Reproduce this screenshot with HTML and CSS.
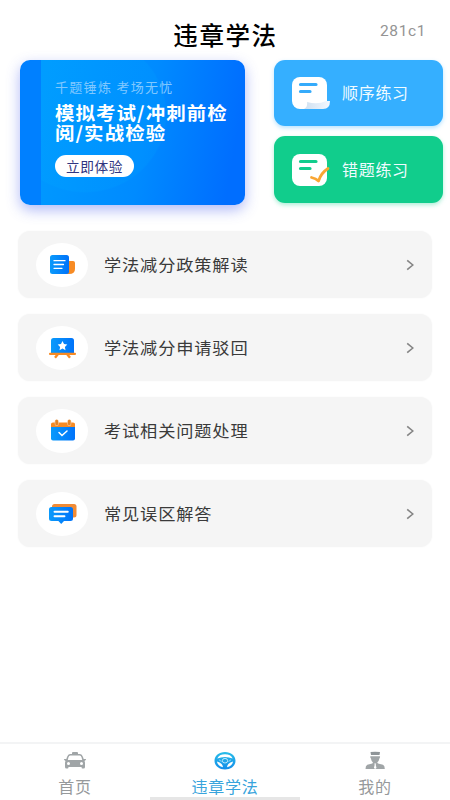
FILE: index.html
```html
<!DOCTYPE html>
<html lang="zh-CN">
<head>
<meta charset="utf-8">
<title>违章学法</title>
<link rel="stylesheet" href="styles.css">
</head>
<body>
<header class="header">
  <h1 class="title">违章学法</h1>
  <span class="code">281c1</span>
</header>
<main class="main">
  <section class="hero">
    <div class="exam">
      <p class="slogan">千题锤炼 考场无忧</p>
      <h2 class="headline">模拟考试/冲刺前检<br>阅/实战检验</h2>
      <button class="try">立即体验</button>
    </div>
    <div class="modes">
      <div class="mode mode-blue">
        <svg width="40" height="34" viewBox="0 0 40 34">
          <defs><linearGradient id="curl"><stop offset="0" stop-color="#cfe0f0"/><stop offset="1" stop-color="#f3f8ff"/></linearGradient></defs>
          <rect y="1" width="35" height="32" rx="8" fill="#fff"/>
          <path d="M12 33Q16 31 15 26Q26 29 34 25H38Q38 33 31 33Z" fill="url(#curl)"/>
          <path d="M8.500 8.500H24M8.500 15.500H18" stroke="#35abfb" stroke-width="3.200" stroke-linecap="round"/>
        </svg>
        <span>顺序练习</span>
      </div>
      <div class="mode mode-green">
        <svg width="40" height="34" viewBox="0 0 40 34">
          <rect y="1" width="35" height="32" rx="8" fill="#fff"/>
          <path d="M8.500 8.500H24M8.500 15.500H18" stroke="#11cd8c" stroke-width="3.200" stroke-linecap="round"/>
          <path d="M19.500 24.500Q24 25.500 26.500 28Q29 20 36 15.500" fill="none" stroke="#f9a633" stroke-width="2.800" stroke-linecap="round" stroke-linejoin="round"/>
        </svg>
        <span>错题练习</span>
      </div>
    </div>
  </section>
  <section class="list">
    <svg class="defs" width="0" height="0"><defs><linearGradient id="blue"><stop offset="0" stop-color="#0a9afb"/><stop offset="1" stop-color="#0073fa"/></linearGradient></defs></svg>
    <div class="row">
      <span class="disc"><svg width="28" height="24" viewBox="0 0 28 24">
        <path d="M17 8H24Q26 8 26 10V16Q26 21 20 21H17Z" fill="#f78b24"/>
        <rect x="1" y="2" width="19" height="19" rx="2.500" fill="url(#blue)"/>
        <path d="M5 7.700H16M5 11.500H14.500M5 15.300H13" stroke="#fff" stroke-width="1.300" stroke-linecap="round"/>
      </svg></span>
      <span class="label">学法减分政策解读</span>
      <svg class="arrow" width="8" height="12" viewBox="0 0 8 12"><path d="M1.200 1.300L6.800 6L1.200 10.700"/></svg>
    </div>
    <div class="row">
      <span class="disc"><svg width="28" height="24" viewBox="0 0 28 24">
        <path d="M9 18L6 21.700M18 18L21 21.700" stroke="#f78b24" stroke-width="2.400"/>
        <path d="M2 17V4.500Q2 2 4.500 2H22.500Q25 2 25 4.500V17Z" fill="url(#blue)"/>
        <rect y="16.700" width="27" height="2.200" rx="1" fill="#f78b24"/>
        <path d="M13.500 5L15 8.100L18.300 8.500L15.900 10.900L16.500 14.200L13.500 12.600L10.500 14.200L11.100 10.900L8.700 8.500L12 8.100Z" fill="#fff"/>
      </svg></span>
      <span class="label">学法减分申请驳回</span>
      <svg class="arrow" width="8" height="12" viewBox="0 0 8 12"><path d="M1.200 1.300L6.800 6L1.200 10.700"/></svg>
    </div>
    <div class="row">
      <span class="disc"><svg width="28" height="24" viewBox="0 0 28 24">
        <path d="M2 9V5Q2 3.500 4 3.500H24Q26 3.500 26 5V9Z" fill="#f78b24"/>
        <path d="M7.700 2.500V5M20.300 2.500V5" stroke="#f6c28f" stroke-width="4" stroke-linecap="round"/>
        <path d="M7.700 2V5M20.300 2V5" stroke="#e58425" stroke-width="2.600" stroke-linecap="round"/>
        <path d="M2 8H26V19.500Q26 21.500 24 21.500H4Q2 21.500 2 19.500Z" fill="url(#blue)"/>
        <path d="M10 13.500L13 16.500L18 12" fill="none" stroke="#fff" stroke-width="1.500" stroke-linecap="round"/>
      </svg></span>
      <span class="label">考试相关问题处理</span>
      <svg class="arrow" width="8" height="12" viewBox="0 0 8 12"><path d="M1.200 1.300L6.800 6L1.200 10.700"/></svg>
    </div>
    <div class="row">
      <span class="disc"><svg width="28" height="24" viewBox="0 0 28 24">
        <rect x="3" y="2" width="24.500" height="13.500" rx="2.500" fill="#f18b35"/>
        <path d="M2.500 5H21.500Q24 5 24 7.500V16.500Q24 19 21.500 19H15L12.200 22L9.400 19H2.500Q0 19 0 16.500V7.500Q0 5 2.500 5Z" fill="url(#blue)"/>
        <path d="M5.500 9.700H18.800M5.500 14.300H15.500" stroke="#fff" stroke-width="1.900" stroke-linecap="round"/>
      </svg></span>
      <span class="label">常见误区解答</span>
      <svg class="arrow" width="8" height="12" viewBox="0 0 8 12"><path d="M1.200 1.300L6.800 6L1.200 10.700"/></svg>
    </div>
  </section>
</main>
<nav class="tabs">
  <div class="tab">
    <svg width="24" height="20" viewBox="0 0 24 20">
      <path fill="#a0a5a7" fill-rule="evenodd" d="M9 2Q9 1 10 1H14Q15 1 15 2V3H17Q19 3 20 6L20.700 8H22.500Q23.500 8 22.800 9L21.500 10Q22 11 22 12V16Q22 17.500 20.500 17.500H19.500Q18.500 17.500 18.500 16H5.500Q5.500 17.500 4.500 17.500H3.500Q2 17.500 2 16V12Q2 11 2.500 10L1.200 9Q.500 8 1.500 8H3.300L4 6Q5 3 7 3H9ZM7.200 4.500Q6 4.500 5.400 6.500L4.800 9H19.200L18.600 6.500Q18 4.500 16.800 4.500ZM5.500 11A1.500 1.500 0 1 0 5.500 14A1.500 1.500 0 1 0 5.500 11ZM18.500 11A1.500 1.500 0 1 0 18.500 14A1.500 1.500 0 1 0 18.500 11Z"/>
    </svg>
    <span>首页</span>
  </div>
  <div class="tab active">
    <svg width="24" height="20" viewBox="0 0 24 20">
      <defs><linearGradient id="wheel" x2="0" y2="1"><stop offset="0" stop-color="#28bde8"/><stop offset="1" stop-color="#138dea"/></linearGradient></defs>
      <path fill="url(#wheel)" fill-rule="evenodd" d="M12 1C18 1 22.500 4.800 22.500 9.800S18 18.500 12 18.500S1.500 14.700 1.500 9.800S6 1 12 1ZM4.300 7.500Q8 6 12 6T19.700 7.500Q18 3.200 12 3.200T4.300 7.500ZM4 10.500Q4.500 15 10 16.200Q9.500 12 4 10.500ZM20 10.500Q14.500 12 14 16.200Q19.500 15 20 10.500Z"/>
      <ellipse cx="12" cy="9.700" rx="2.700" ry="2.300" fill="none" stroke="#dff5ff" stroke-width=".8"/>
      <path d="M6 8.800L8.500 10.500M18 8.800L15.500 10.500" stroke="#dff5ff" stroke-width=".6"/>
    </svg>
    <span>违章学法</span>
  </div>
  <div class="tab">
    <svg width="24" height="20" viewBox="0 0 24 20">
      <path fill="#8f9598" d="M7.500 1Q12 .3 17 1L16.500 4H8Z"/>
      <path fill="#a0a5a7" d="M7.500 5.200H16.800Q17.500 6 16.500 7.200Q16 10 14.200 11.500L15 12.500L20 13.800Q21.800 14.500 21.800 18H2.500Q2.500 14.500 4.300 13.800L9.300 12.500L10 11.500Q8.300 10 7.800 7.200Q6.800 6 7.500 5.200Z"/>
      <path fill="#fff" d="M11.200 12.500H13.200L12.700 13.800L13.500 17L12.200 18L10.900 17L11.700 13.800Z"/>
    </svg>
    <span>我的</span>
  </div>
  <i class="indicator"></i>
</nav>
</body>
</html>
```
FILE: styles.css
```css
* { box-sizing: border-box; }
body {
  margin: 0;
  height: 800px;
  display: flex;
  flex-direction: column;
  overflow: hidden;
  background: #fff;
  font-family: "Noto Sans CJK SC", sans-serif;
  color: #3a3a3a;
}
h1, h2, p { margin: 0; }
svg { display: block; flex: none; }
.header {
  height: 60px;
  display: grid;
  grid-template-columns: 1fr auto 1fr;
  padding-top: 17px;
}
.title {
  grid-column: 2;
  font-size: 24.5px;
  line-height: 36px;
  font-weight: 500;
  letter-spacing: 1.600px;
  margin-left: 1px;
  color: #000;
}
.code {
  justify-self: end;
  margin-right: 24px;
  font: 15.5px/29px Roboto, sans-serif;
  letter-spacing: .6px;
  color: #949494;
}
.main { flex: 1; }
.hero {
  display: flex;
  gap: 29px;
  padding: 0 7px 0 20px;
}
.exam {
  width: 225px;
  height: 144.5px;
  padding: 17px 0 0 35px;
  border-radius: 10px;
  background:
    linear-gradient(90deg, #0080ff 21px, transparent 21px),
    radial-gradient(ellipse 82px 79px at 65px 54px, rgba(0, 180, 255, .12) 98%, transparent 100%),
    linear-gradient(100deg, #0099ff 12%, #008bff 55%, #006eff 92%);
  box-shadow: 0 5px 14px rgba(70, 90, 235, .42);
}
.slogan {
  font-size: 13px;
  line-height: 20px;
  letter-spacing: 1.3px;
  white-space: nowrap;
  color: #80c8ff;
}
.headline {
  margin-top: 5px;
  font-size: 18px;
  line-height: 20px;
  font-weight: 700;
  letter-spacing: 1px;
  white-space: nowrap;
  color: #fff;
  transform: scaleX(1.08);
  transform-origin: left;
}
.try {
  display: block;
  width: 79px;
  height: 22px;
  margin-top: 13px;
  padding: 0;
  border: 0;
  border-radius: 11px;
  background: #fff;
  font: 13.7px/20px "Noto Sans CJK SC", sans-serif;
  letter-spacing: .6px;
  color: #313580;
}
.modes {
  flex: 1;
  display: grid;
  grid-template-rows: 66px 67px;
  gap: 10px;
  align-content: start;
}
.mode {
  display: flex;
  align-items: center;
  gap: 10px;
  padding-left: 18px;
  border-radius: 11px;
  font-size: 16px;
  letter-spacing: .7px;
  color: #f0fbff;
}
.mode span { margin-top: -2px; }
.mode-blue { background: #35afff; box-shadow: 0 2px 4px rgba(53, 175, 255, .35); }
.mode-green { background: #11cd8c; box-shadow: 0 2px 4px rgba(17, 205, 140, .35); }
.list {
  display: grid;
  gap: 16px;
  margin: 26.500px 18px 0 18px;
  position: relative;
}
.defs { position: absolute; }
.row {
  height: 67px;
  display: flex;
  align-items: center;
  padding: 0 18px;
  border-radius: 12px;
  background: #f5f5f5;
  box-shadow: 0 0 2px #f5f5f5;
}
.disc {
  width: 52px;
  height: 44px;
  padding-left: 2px;
  display: flex;
  align-items: center;
  justify-content: center;
  border-radius: 50%;
  background: #fff;
}
.label {
  flex: 1;
  margin: -1px 0 0 15.5px;
  font-size: 16px;
  letter-spacing: .8px;
  transform: scaleX(1.075);
  transform-origin: left;
}
.arrow { fill: none; stroke: #858585; stroke-width: 1.6; }
.tabs {
  position: relative;
  height: 58px;
  display: grid;
  grid-template-columns: repeat(3, 1fr);
  border-top: 2px solid #f3f4f5;
}
.tab {
  display: flex;
  flex-direction: column;
  align-items: center;
  padding-top: 7px;
  font-size: 16px;
  line-height: 22px;
  letter-spacing: .700px;
  color: #96999b;
}
.tab span { margin-top: 4px; }
.active { color: #38a4dc; }
.indicator {
  position: absolute;
  left: 150px;
  bottom: 0;
  width: 150px;
  height: 3px;
  background: #e6e6e6;
}
```
